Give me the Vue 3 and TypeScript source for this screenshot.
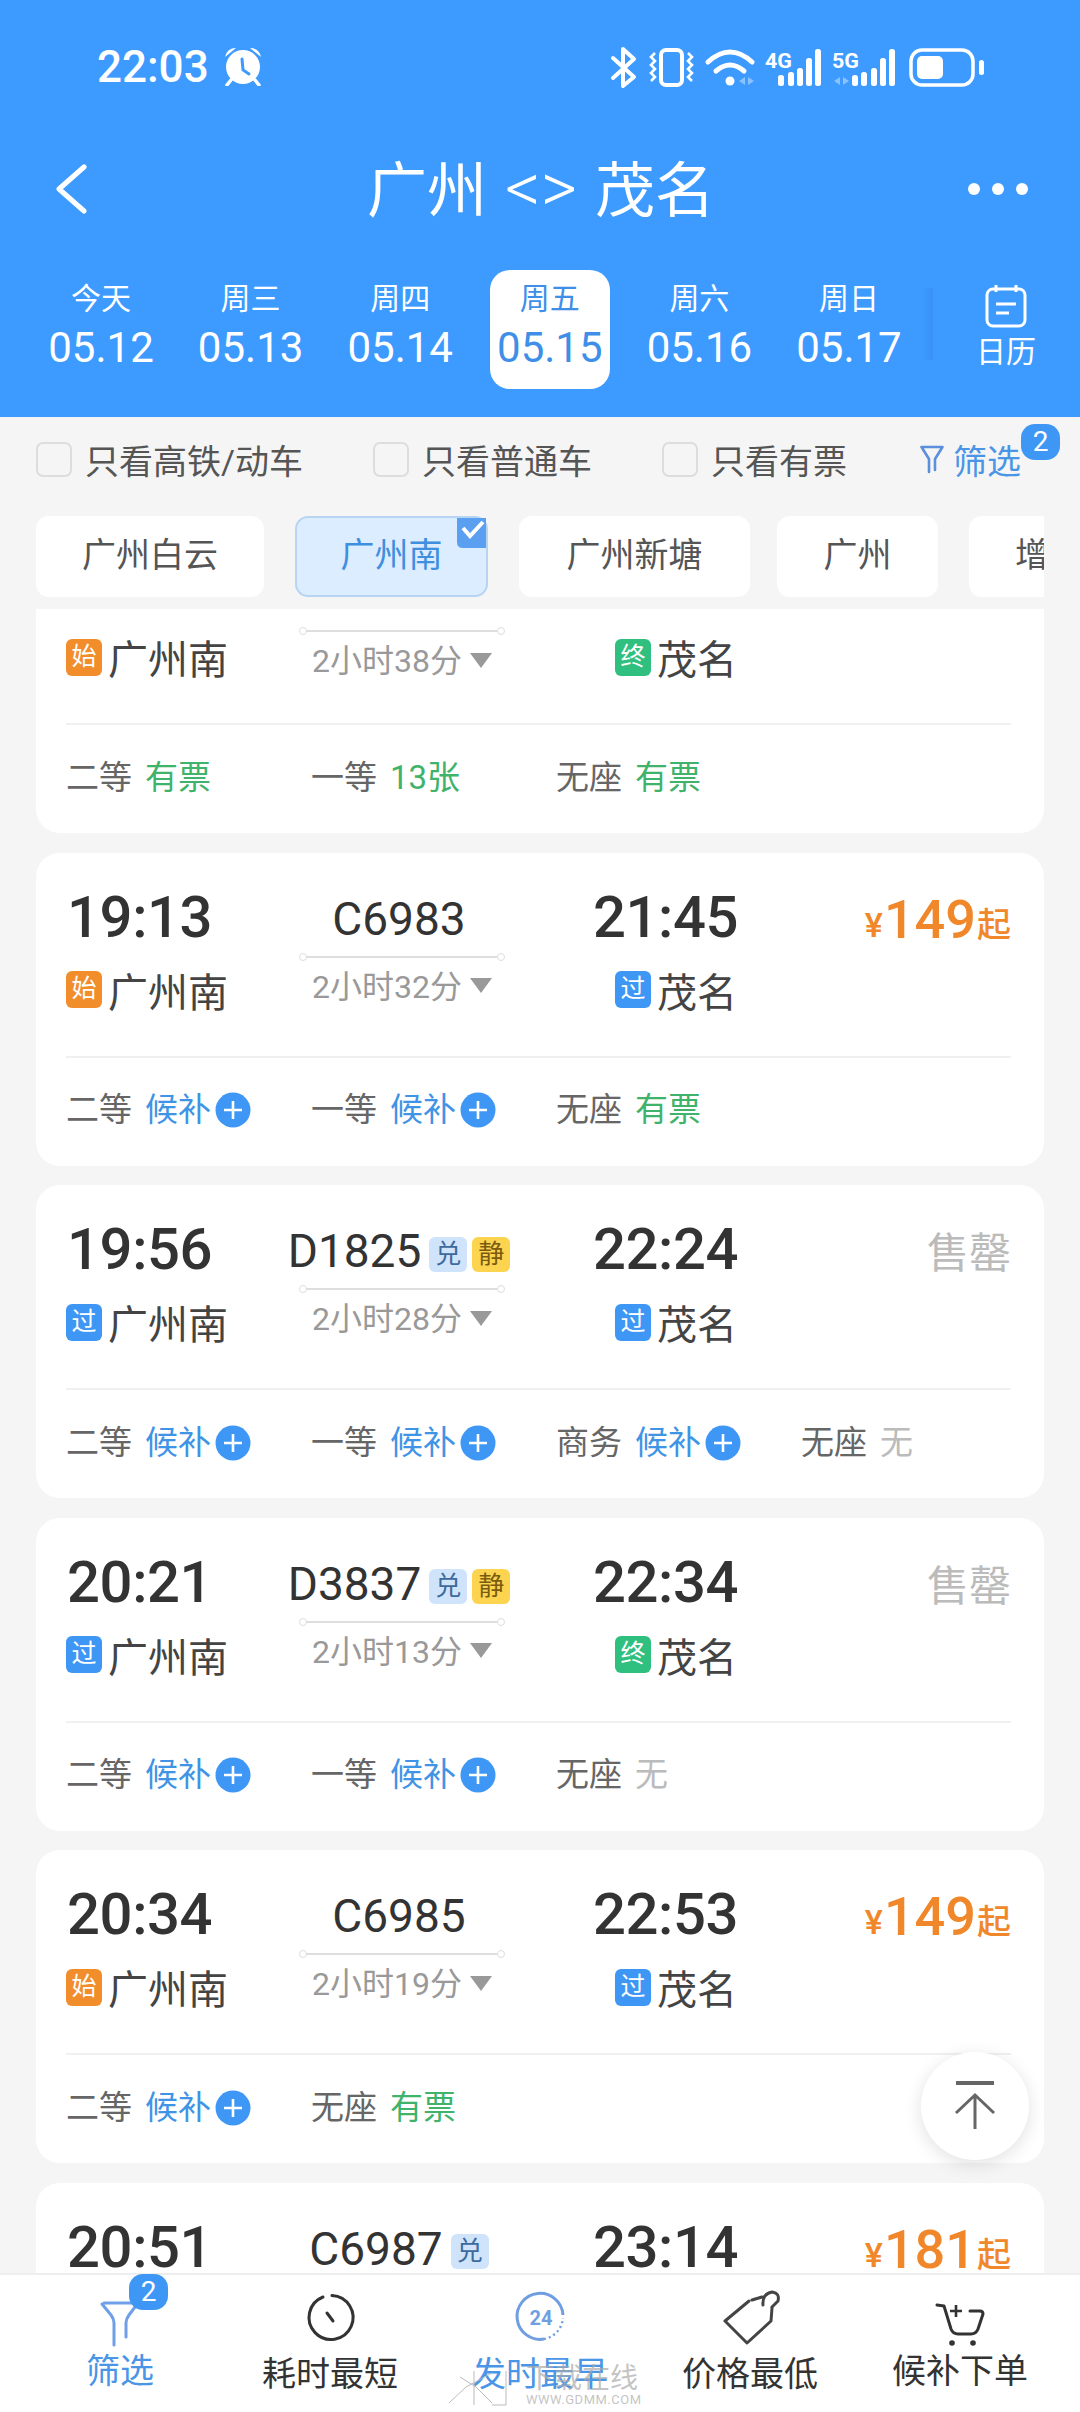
<script setup lang="ts">
interface Seat { label: string; status: string; kind: 'ok' | 'wait' | 'none' }
interface Train {
  dep: string; arr: string; no: string; tags: string[]; dur: string;
  from: string; to: string; price: string; sold: boolean; seats: Seat[]; clipped?: boolean
}
const days = [
  { d: '今天', n: '05.12' }, { d: '周三', n: '05.13' }, { d: '周四', n: '05.14' },
  { d: '周五', n: '05.15', on: true }, { d: '周六', n: '05.16' }, { d: '周日', n: '05.17' }
]
const stations = [
  { n: '广州白云', w: 228 }, { n: '广州南', w: 193, on: true }, { n: '广州新塘', w: 231 },
  { n: '广州', w: 161 }, { n: '增城', w: 160 }
]
const checks = ['只看高铁/动车', '只看普通车', '只看有票']
const ok = (label: string): Seat => ({ label, status: '有票', kind: 'ok' })
const wait = (label: string): Seat => ({ label, status: '候补', kind: 'wait' })
const none = (label: string): Seat => ({ label, status: '无', kind: 'none' })
const trains: Train[] = [
  { dep: '', arr: '', no: '', tags: [], dur: '2小时38分', from: '始', to: '终', price: '', sold: false, clipped: true,
    seats: [ok('二等'), { label: '一等', status: '13张', kind: 'ok' }, ok('无座')] },
  { dep: '19:13', arr: '21:45', no: 'C6983', tags: [], dur: '2小时32分', from: '始', to: '过', price: '149', sold: false,
    seats: [wait('二等'), wait('一等'), ok('无座')] },
  { dep: '19:56', arr: '22:24', no: 'D1825', tags: ['兑', '静'], dur: '2小时28分', from: '过', to: '过', price: '', sold: true,
    seats: [wait('二等'), wait('一等'), wait('商务'), none('无座')] },
  { dep: '20:21', arr: '22:34', no: 'D3837', tags: ['兑', '静'], dur: '2小时13分', from: '过', to: '终', price: '', sold: true,
    seats: [wait('二等'), wait('一等'), none('无座')] },
  { dep: '20:34', arr: '22:53', no: 'C6985', tags: [], dur: '2小时19分', from: '始', to: '过', price: '149', sold: false,
    seats: [wait('二等'), ok('无座')] },
  { dep: '20:51', arr: '23:14', no: 'C6987', tags: ['兑'], dur: '', from: '', to: '', price: '181', sold: false,
    seats: [] }
]
const badgeClass = (b: string) => (b === '始' ? 'b-start' : b === '终' ? 'b-end' : 'b-pass')
const zigzagL = 'M655 53 L651 57 L655 61 L651 65 L655 69 L651 73 L655 77 L651 81'
const zigzagR = 'M688 53 L692 57 L688 61 L692 65 L688 69 L692 73 L688 77 L692 81'
const bars4 = [[778, 75], [788, 72], [797, 68], [806, 58], [815, 49]]
const bars5 = [[852, 75], [861, 72], [871, 68], [880, 58], [889, 49]]
</script>

<template>
  <div class="page">
    <header class="head">
      <div class="status">
        <div class="clock">
          <span>22:03</span>
          <svg class="alarm" width="38" height="38" viewBox="225 48 38 38">
            <circle cx="243" cy="67" r="17" fill="#fff" />
            <path d="M225 57 Q227 48 236 48 Z M261 57 Q259 48 250 48 Z" fill="#fff" />
            <path d="M231 80 L227 85 M255 80 L259 85" stroke="#fff" stroke-width="3.5" stroke-linecap="round" />
            <path d="M242 59 L243 70 L249 74" fill="none" stroke="#3d9aff" stroke-width="3" stroke-linecap="round" />
          </svg>
        </div>
        <svg class="sys" width="385" height="55" viewBox="605 40 385 55">
          <path d="M613 58 L634 77 L623 86 V49 L634 59 L613 78" fill="none" stroke="#fff" stroke-width="4" stroke-linejoin="round" stroke-linecap="round" />
          <rect x="661" y="50" width="21" height="35" rx="5" fill="none" stroke="#fff" stroke-width="4" />
          <path :d="zigzagL" fill="none" stroke="#fff" stroke-width="2.6" />
          <path :d="zigzagR" fill="none" stroke="#fff" stroke-width="2.6" />
          <path d="M708 62 Q730 42 752 62" fill="none" stroke="#fff" stroke-width="5" stroke-linecap="round" />
          <path d="M716 71 Q730 59 744 71" fill="none" stroke="#fff" stroke-width="5" stroke-linecap="round" />
          <circle cx="730" cy="81" r="4.5" fill="#fff" />
          <path d="M745 77 L739 81 L745 85 Z M748 77 L754 81 L748 85 Z M840 77 L834 81 L840 85 Z M843 77 L849 81 L843 85 Z" fill="#fff" opacity=".4" />
          <text x="765" y="68" class="net" textLength="27" lengthAdjust="spacingAndGlyphs">4G</text>
          <text x="832" y="68" class="net" textLength="27" lengthAdjust="spacingAndGlyphs">5G</text>
          <rect v-for="b in bars4" :key="b[0]" :x="b[0]" :y="b[1]" width="6" :height="86 - b[1]" rx="2.5" fill="#fff" />
          <rect v-for="b in bars5" :key="b[0]" :x="b[0]" :y="b[1]" width="6" :height="86 - b[1]" rx="2.5" fill="#fff" />
          <rect x="911" y="50" width="62" height="35" rx="11" fill="none" stroke="#fff" stroke-width="3.5" />
          <rect x="917" y="56" width="26" height="23" rx="5" fill="#fff" />
          <rect x="979" y="60" width="5" height="15" rx="2.5" fill="#fff" />
        </svg>
      </div>
      <div class="title-row">
        <svg class="back" width="34" height="50" viewBox="0 0 34 50">
          <path d="M30 3 L5 25 L30 47" fill="none" stroke="#fff" stroke-width="5" stroke-linecap="round" stroke-linejoin="round" />
        </svg>
        <div class="title"><span>广州</span><span class="ar">&lt;&gt;</span><span>茂名</span></div>
        <div class="dots"><i></i><i></i><i></i></div>
      </div>
      <div class="dates">
        <div v-for="x in days" :key="x.n" class="tab" :class="{ on: x.on }">
          <div class="tab-d">{{ x.d }}</div>
          <div class="tab-n">{{ x.n }}</div>
        </div>
        <div class="fade"></div>
        <div class="cal">
          <svg width="42" height="44" viewBox="0 0 42 44">
            <rect x="2" y="5" width="38" height="37" rx="6" fill="none" stroke="#fff" stroke-width="3" />
            <path d="M11 1 V8 M31 1 V8" stroke="#fff" stroke-width="3" />
            <path d="M11 20 H31 M11 29 H24" stroke="#fff" stroke-width="3" />
          </svg>
          <span>日历</span>
        </div>
      </div>
    </header>

    <div class="filters">
      <div v-for="c in checks" :key="c" class="chk"><i></i><span>{{ c }}</span></div>
      <div class="flt">
        <svg width="24" height="30" viewBox="0 0 24 30">
          <path d="M1.5 2 H22.5 L15 14 V25 M9 27 V14 L1.5 2" fill="none" stroke="#5a8fdc" stroke-width="2.6" stroke-linecap="round" stroke-linejoin="round" />
        </svg>
        <span>筛选</span>
        <b class="badge b-top">2</b>
      </div>
    </div>

    <div class="chips">
      <div v-for="s in stations" :key="s.n" class="chip" :class="{ on: s.on }" :style="{ width: s.w + 'px' }">
        <span>{{ s.n }}</span>
        <svg v-if="s.on" class="tick" width="29" height="30" viewBox="0 0 29 30">
          <path d="M0 0 H29 V30 H6 Q0 30 0 24 Z" fill="#5a9ff0" />
          <path d="M6 10 L13 18 L26 4" fill="none" stroke="#fff" stroke-width="4" />
        </svg>
      </div>
    </div>

    <main class="list">
      <article v-for="t in trains" :key="t.dur + t.dep" class="card" :class="{ clipped: t.clipped }">
        <div class="top">
          <div class="time">{{ t.dep }}</div>
          <div class="mid">
            <div class="train">
              <span>{{ t.no }}</span>
              <em v-for="g in t.tags" :key="g" :class="g === '兑' ? 'tag-d' : 'tag-j'">{{ g }}</em>
            </div>
            <div class="line"></div>
            <div v-if="t.dur" class="dur"><span>{{ t.dur }}</span><i></i></div>
          </div>
          <div class="time arr">{{ t.arr }}</div>
          <div class="price">
            <template v-if="t.sold"><span class="sold">售罄</span></template>
            <template v-else-if="t.price"><small>¥</small><b>{{ t.price }}</b><small>起</small></template>
          </div>
          <div v-if="t.from" class="st"><u :class="badgeClass(t.from)">{{ t.from }}</u><span>广州南</span></div>
          <div v-if="t.to" class="st to"><u :class="badgeClass(t.to)">{{ t.to }}</u><span>茂名</span></div>
        </div>
        <div class="seats">
          <div v-for="s in t.seats" :key="s.label" class="seat">
            <span class="lb">{{ s.label }}</span>
            <span class="v" :class="s.kind">{{ s.status }}</span>
            <svg v-if="s.kind === 'wait'" class="plus" width="36" height="36" viewBox="0 0 36 36">
              <circle cx="18" cy="18" r="17.5" fill="#3f97f5" />
              <path d="M18 9 V27 M9 18 H27" stroke="#fff" stroke-width="2.6" />
            </svg>
          </div>
        </div>
      </article>
    </main>

    <div class="up">
      <svg width="42" height="50" viewBox="0 0 42 50">
        <path d="M2 2 H40" stroke="#666" stroke-width="4" />
        <path d="M21 48 V14 M2 32 L21 14 L40 32" fill="none" stroke="#666" stroke-width="3" />
      </svg>
    </div>

    <nav class="bar">
      <div class="item">
        <svg width="80" height="74" viewBox="0 0 80 74">
          <path d="M24 28 H58 L49 40 Q46 44 46 48 V62 M34 70 V48 Q34 44 31 40 L22 29" fill="none" stroke="#6f9fe8" stroke-width="3" stroke-linecap="round" stroke-linejoin="round" />
        </svg>
        <b class="badge bot">2</b>
        <span class="lab blue hi">筛选</span>
      </div>
      <div class="item">
        <svg width="80" height="74" viewBox="0 0 80 74">
          <path d="M33 22 A22 22 0 1 0 42 20.5" fill="none" stroke="#333" stroke-width="3" stroke-linecap="round" />
          <path d="M37 38 L43 46" stroke="#333" stroke-width="3" stroke-linecap="round" />
        </svg>
        <span class="lab">耗时最短</span>
      </div>
      <div class="item">
        <svg width="80" height="74" viewBox="0 0 80 74">
          <path d="M63 40 A23 23 0 1 0 44 64" fill="none" stroke="#6f9fe0" stroke-width="3" />
          <path d="M44 64 A23 23 0 0 0 63 43" fill="none" stroke="#6f9fe0" stroke-width="2.4" stroke-dasharray="2 3" />
          <text x="41" y="50" text-anchor="middle" class="t24">24</text>
        </svg>
        <span class="lab blue">发时最早</span>
      </div>
      <div class="item">
        <svg width="80" height="74" viewBox="0 0 80 74">
          <path d="M39 26 L15 46 L37 68 L61 46 L62 33 M52 22 L42 25" fill="none" stroke="#444" stroke-width="3" stroke-linecap="round" stroke-linejoin="round" />
          <path d="M53 30 Q52 19 62 17 Q70 18 68 26 L62 32" fill="none" stroke="#444" stroke-width="3" stroke-linecap="round" />
        </svg>
        <span class="lab">价格最低</span>
      </div>
      <div class="item">
        <svg width="80" height="74" viewBox="0 0 80 74">
          <path d="M17 30 L24 31 L31 54 Q33 59 38 59 H51 Q56 59 58 54 L63 39 Q63 36 60 36 H50" fill="none" stroke="#333" stroke-width="3" stroke-linecap="round" stroke-linejoin="round" />
          <path d="M36 30 V42 M30 36 H42" stroke="#333" stroke-width="2.6" />
          <circle cx="32" cy="68" r="2.8" fill="#333" />
          <circle cx="53" cy="68" r="2.8" fill="#333" />
        </svg>
        <span class="lab hi">候补下单</span>
      </div>
    </nav>

    <div class="mark">
      <svg width="70" height="38" viewBox="0 0 70 38">
        <path d="M3 34 L20 18 L46 4 M14 8 L30 18 L46 34 M28 2 V36 M60 2 V36 H46" fill="none" stroke="#bbb" stroke-width="1" />
      </svg>
      <div class="mark-t"><div>下载在线</div><div class="url">WWW.GDMM.COM</div></div>
    </div>
  </div>
</template>

<style scoped>
.page {
  position: relative;
  width: 1080px;
  height: 2412px;
  overflow: hidden;
  display: flex;
  flex-direction: column;
  background: #f5f5f5;
  font-family: Roboto, "Noto Sans CJK SC", sans-serif;
  color: #333;
}
.head { height: 417px; flex: none; background: #3d9aff; color: #fff; }
.status { height: 134px; display: flex; align-items: center; justify-content: space-between; padding: 0 90px 0 97px; }
.clock { display: flex; align-items: center; gap: 16px; font-size: 44px; font-weight: 500; }
.sys { display: block; }
.net { font: 700 21px Roboto, sans-serif; fill: #fff; }
.title-row { height: 110px; display: grid; grid-template-columns: 1fr auto 1fr; align-items: center; padding: 0 52px 0 54px; }
.title { display: flex; align-items: center; gap: 18px; font-size: 60px; line-height: 70px; white-space: nowrap; padding-top: 5px; }
.ar { font-size: 70px; font-weight: 300; margin-top: -8px; }
.dots { justify-self: end; display: flex; gap: 12px; }
.dots i { width: 12px; height: 12px; border-radius: 50%; background: #fff; }
.dates { height: 119px; margin-top: 26px; display: flex; padding-left: 41px; gap: 29.6px; }
.tab { width: 120px; flex: none; border-radius: 20px; padding-top: 11px; text-align: center; }
.tab.on { background: #fff; color: #3f8fe8; }
.tab-d { font-size: 30px; line-height: 36px; }
.tab-n { font-size: 42px; line-height: 50px; margin: 6px -10px 0; }
.fade { width: 10px; height: 72px; margin: 18px -15.6px 0 -15.6px; background: linear-gradient(90deg, rgba(50,125,230,.05), rgba(50,125,230,.3)); }
.cal { flex: none; width: 118px; display: flex; flex-direction: column; align-items: center; padding-top: 14px; font-size: 30px; line-height: 36px; }
.cal svg { display: block; margin-bottom: 6px; }
.filters { height: 99px; box-sizing: border-box; padding: 0 0 14px 36px; flex: none; display: flex; align-items: center; gap: 70px; font-size: 34px; color: #555; white-space: nowrap; }
.chk { display: flex; align-items: center; gap: 13px; flex: none; }
.chk i { width: 36px; height: 35px; box-sizing: border-box; border: 2.5px solid #ddd; border-radius: 7px; }
.flt { position: relative; display: flex; align-items: center; gap: 9px; color: #4a95e6; margin-left: 3px; flex: none; }
.badge { position: absolute; background: #3f97f5; color: #fff; font-weight: 400; font-size: 28px; line-height: 36px; width: 39px; height: 36px; text-align: center; border-radius: 14px; }
.badge.b-top { left: 101px; top: -11px; }
.chips { height: 81px; flex: none; margin: 0 36px; display: flex; gap: 31px; overflow: hidden; font-size: 34px; color: #555; }
.chip { flex: none; box-sizing: border-box; background: #fff; border-radius: 13px; display: flex; align-items: center; justify-content: center; position: relative; white-space: nowrap; padding-bottom: 8px; }
.chip:nth-child(4) { margin-left: -4px; }
.chip:last-child { justify-content: flex-start; padding-left: 46px; }
.chip.on { background: #dcedff; border: 2.5px solid #b7d4f2; color: #3f8fe0; }
.tick { position: absolute; top: 0; right: 0; }
.list { flex: 1; min-height: 0; margin-top: 12px; overflow: hidden; padding: 0 36px; }
.card { height: 313px; background: #fff; border-radius: 24px; margin-bottom: 19.5px; }
.card:first-child { margin-top: -89px; }
.top { height: 205px; box-sizing: border-box; border-bottom: 2px solid #f0f0f0; margin: 0 33px 0 30px; padding-top: 29px; display: grid; grid-template-columns: 235px 202px 325px 183px; grid-template-rows: 70px 82px; position: relative; }
.time { font-size: 58px; line-height: 70px; font-weight: 500; color: #333; letter-spacing: -.4px; padding-left: 1px; }
.arr { text-align: center; padding-left: 0; }
.mid { grid-row: 1 / 3; grid-column: 2; display: flex; flex-direction: column; }
.clipped .mid { padding-top: 7px; }
.train { height: 74px; flex: none; display: flex; align-items: center; justify-content: center; padding-right: 6px; gap: 5px; font-size: 46px; white-space: nowrap; color: #333; }
.train em { font-style: normal; font-size: 26px; width: 38px; height: 35px; line-height: 34px; text-align: center; border-radius: 6px; flex: none; margin-top: 6px; }
.train span + em { margin-left: 3px; }
.tag-d { background: #cfe3fb; color: #3d6a9b; }
.tag-j { background: #fdd44f; color: #7a5c10; }
.line { height: 2px; flex: none; background: #dedede; position: relative; }
.line::before, .line::after { content: ""; position: absolute; top: -3px; width: 8px; height: 8px; box-sizing: border-box; border: 1.5px solid #dedede; border-radius: 50%; background: #fff; }
.line::before { left: -2px; }
.line::after { right: -2px; }
.dur { display: flex; align-items: center; gap: 8px; padding-left: 11px; margin-top: 6px; height: 40px; font-size: 32px; color: #999; white-space: nowrap; }
.dur i { width: 0; height: 0; border-left: 11px solid transparent; border-right: 11px solid transparent; border-top: 15px solid #999; margin-top: 4px; }
.price { grid-column: 4; grid-row: 1; display: flex; justify-content: flex-end; align-items: flex-end; color: #f0872a; height: 70px; white-space: nowrap; }
.price b { font-size: 54px; line-height: 64px; font-weight: 500; margin: 0 1px; }
.price small { font-size: 34px; line-height: 54px; font-weight: 500; }
.sold { font-size: 42px; line-height: 80px; color: #bbb; align-self: flex-start; }
.st { grid-row: 2; grid-column: 1; height: 82px; margin-top: -3px; display: flex; align-items: center; gap: 6px; font-size: 40px; color: #444; white-space: nowrap; }
.st.to { grid-column: 3; padding-left: 112px; }
.st u { text-decoration: none; width: 36px; height: 37px; line-height: 36px; text-align: center; border-radius: 6px; color: #fff; font-size: 25px; flex: none; }
.b-start { background: #f28d2c; }
.b-pass { background: #3f97f5; }
.b-end { background: #2fbf7f; }
.seats { display: flex; padding: 0 0 0 30px; height: 106px; align-items: center; font-size: 33px; }
.seat { width: 245px; flex: none; display: flex; align-items: center; white-space: nowrap; box-sizing: border-box; margin-top: -7px; }
.lb { color: #666; }
.v { margin-left: 13px; }
.v.ok { color: #3fb36b; }
.v.wait { color: #3f94e6; }
.v.none { color: #bbb; }
.plus { margin: 6px 0 0 4px; }
.up { position: absolute; left: 921px; top: 2052px; width: 108px; height: 108px; border-radius: 50%; background: #fff; box-shadow: 0 4px 18px rgba(0,0,0,.12); display: flex; align-items: center; justify-content: center; }
.bar { height: 139px; flex: none; background: #fff; border-top: 2px solid #eee; box-sizing: border-box; padding: 0 15px; display: flex; position: relative; }
.item { width: 210px; flex: none; position: relative; display: flex; flex-direction: column; align-items: center; }
.item svg { display: block; flex: none; }
.lab { font-size: 34px; line-height: 48px; margin-top: 1px; color: #333; }
.lab.hi { margin-top: -2px; }
.lab.blue { color: #4a95e6; }
.badge.bot { left: 114px; top: -1px; }
.t24 { font: 700 20px Roboto, sans-serif; fill: #6f9fe0; }
.mark { position: absolute; left: 446px; top: 2365px; display: flex; align-items: flex-end; gap: 10px; color: rgba(170,170,170,.7); pointer-events: none; }
.mark-t { font-size: 28px; line-height: 28px; white-space: nowrap; }
.url { font-size: 13px; line-height: 14px; letter-spacing: .5px; }
</style>
